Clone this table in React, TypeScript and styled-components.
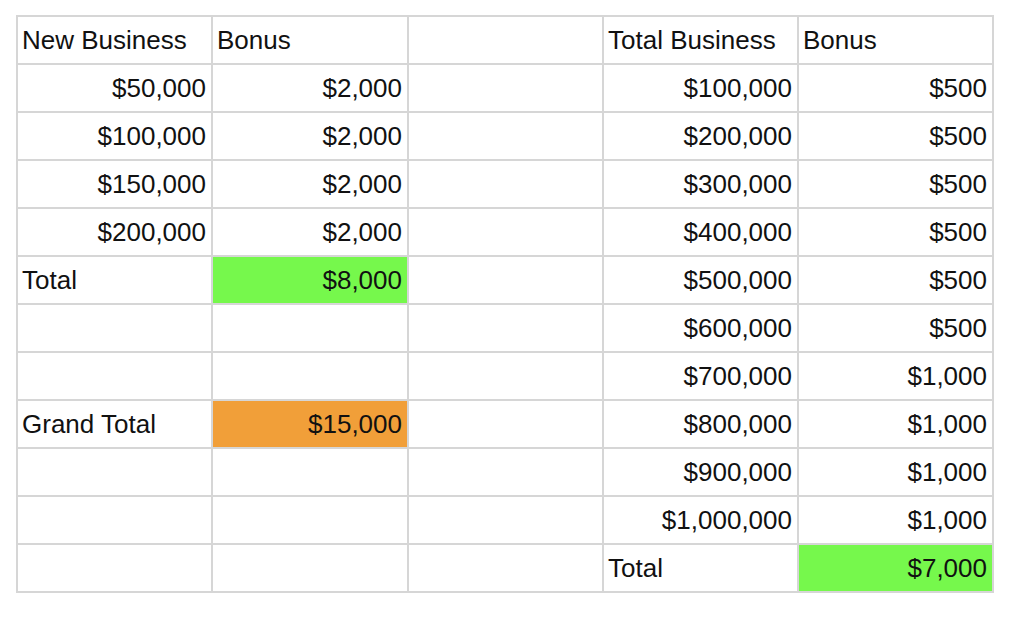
import React from "react";
import styled, { createGlobalStyle } from "styled-components";

type Fill = "green" | "orange";

interface CellData {
	text?: string;
	align?: "left" | "right";
	fill?: Fill;
}

const GlobalStyle = createGlobalStyle`
	body {
		margin: 0;
		background: #ffffff;
		font-family: "Liberation Sans", Arial, sans-serif;
	}
`;

const fills: Record<Fill, string> = {
	green: "#76f84c",
	orange: "#f19f39"
};

const Page = styled.div`
	padding: 15px 0 0 16px;
`;

const Sheet = styled.table`
	border-collapse: collapse;
	table-layout: fixed;
	width: 978px;
`;

const Cell = styled.td<{ $align: "left" | "right"; $fill?: Fill }>`
	height: 46px;
	padding: 0 5px 0 4px;
	border: 2px solid #d6d6d6;
	background: ${p => (p.$fill ? fills[p.$fill] : "#ffffff")};
	color: #111111;
	font-size: 26px;
	line-height: 30px;
	text-align: ${p => p.$align};
	white-space: nowrap;
	overflow: hidden;
`;

const L = (text: string): CellData => ({ text, align: "left" });
const R = (text: string, fill?: Fill): CellData => ({ text, align: "right", fill });
const E: CellData = {};

const rows: CellData[][] = [
	[L("New Business"), L("Bonus"), E, L("Total Business"), L("Bonus")],
	[R("$50,000"), R("$2,000"), E, R("$100,000"), R("$500")],
	[R("$100,000"), R("$2,000"), E, R("$200,000"), R("$500")],
	[R("$150,000"), R("$2,000"), E, R("$300,000"), R("$500")],
	[R("$200,000"), R("$2,000"), E, R("$400,000"), R("$500")],
	[L("Total"), R("$8,000", "green"), E, R("$500,000"), R("$500")],
	[E, E, E, R("$600,000"), R("$500")],
	[E, E, E, R("$700,000"), R("$1,000")],
	[L("Grand Total"), R("$15,000", "orange"), E, R("$800,000"), R("$1,000")],
	[E, E, E, R("$900,000"), R("$1,000")],
	[E, E, E, R("$1,000,000"), R("$1,000")],
	[E, E, E, L("Total"), R("$7,000", "green")]
];

export default function App() {
	return (
		<Page>
			<GlobalStyle />
			<Sheet>
				<colgroup>
					{[0, 1, 2, 3, 4].map(i => (
						<col key={i} style={{ width: i === 1 ? 196 : 195 }} />
					))}
				</colgroup>
				<tbody>
					{rows.map((row, r) => (
						<tr key={r}>
							{row.map((cell, c) => (
								<Cell key={c} $align={cell.align ?? "left"} $fill={cell.fill}>
									{cell.text}
								</Cell>
							))}
						</tr>
					))}
				</tbody>
			</Sheet>
		</Page>
	);
}
